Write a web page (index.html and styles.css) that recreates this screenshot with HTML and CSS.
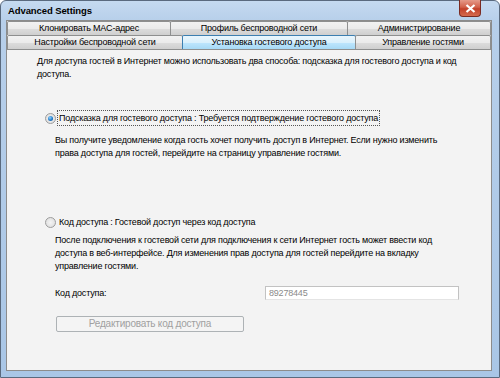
FILE: index.html
```
<!DOCTYPE html>
<html lang="ru">
  <head>
    <meta charset="UTF-8" />
    <title>Advanced Settings</title>
    <link rel="stylesheet" href="styles.css">
  </head>
  <body>
    <div class="window">
      <!-- Title bar -->
      <div class="titlebar">
        <span class="title">Advanced Settings</span>
        <div class="close">
          <svg width="11" height="9" viewBox="0 0 11 9">
            <path d="M1.5 1 L9.5 8 M9.5 1 L1.5 8" stroke="#fff" stroke-width="2.2" />
          </svg>
        </div>
      </div>

      <div class="client">
        <!-- Tab rows -->
        <div class="tabrow">
          <div class="tab w163">Клонировать MAC-адрес</div>
          <div class="tab w177">Профиль беспроводной сети</div>
          <div class="tab grow">Администрирование</div>
        </div>
        <div class="tabrow">
          <div class="tab w175">Настройки беспроводной сети</div>
          <div class="tab w173 active">Установка гостевого доступа</div>
          <div class="tab grow">Управление гостями</div>
        </div>

        <!-- Page content -->
        <div class="panel">
          <p class="intro">
            Для доступа гостей в Интернет можно использовать два способа: подсказка для гостевого доступа и код доступа.
          </p>

          <div class="option first">
            <span class="radio checked"></span>
            <span class="label focused">Подсказка для гостевого доступа : Требуется подтверждение гостевого доступа</span>
          </div>
          <p class="desc">
            Вы получите уведомление когда гость хочет получить доступ в Интернет. Если нужно изменить права доступа для гостей, перейдите на страницу управление гостями.
          </p>

          <div class="option second">
            <span class="radio"></span>
            <span class="label">Код доступа : Гостевой доступ через код доступа</span>
          </div>
          <p class="desc">
            После подключения к гостевой сети для подключения к сети Интернет гость может ввести код доступа в веб-интерфейсе. Для изменения прав доступа для гостей перейдите на вкладку управление гостями.
          </p>

          <div class="code-row">
            <span class="code-label">Код доступа:</span>
            <div class="code-input">89278445</div>
          </div>
          <div class="btn-disabled">Редактировать код доступа</div>
        </div>
      </div>
    </div>
  </body>
</html>
```

FILE: styles.css
```
* {
  margin: 0;
  padding: 0;
  box-sizing: border-box;
}
body {
  width: 500px;
  height: 378px;
  overflow: hidden;
  font-family: "Liberation Sans", "DejaVu Sans", sans-serif;
  font-size: 9px;
  letter-spacing: -0.2px;
  color: #000;
  background: #fff;
}
/* Window frame (Win7 basic look) */
.window {
  width: 500px;
  height: 378px;
  border: 1px solid #5a6a7e;
  border-radius: 6px 6px 0 0;
  background: linear-gradient(to bottom, #c5daf0 0px, #b7cfea 20px, #a9c6e6 100%);
  display: flex;
  flex-direction: column;
  padding: 0 7px 6px 5px;
}
.titlebar {
  height: 19px;
  display: flex;
  align-items: flex-start;
  justify-content: space-between;
}
.title {
  font-weight: bold;
  font-size: 9.5px;
  letter-spacing: -0.1px;
  padding-top: 4px;
  padding-left: 2px;
  color: #000;
}
.close {
  width: 22px;
  height: 17px;
  margin-right: 11px;
  margin-top: -1px;
  border: 1px solid #7a2b22;
  border-top: none;
  border-radius: 0 0 4px 4px;
  background: linear-gradient(to bottom, #e59a8a 0%, #d2614b 45%, #c2402a 55%, #d46a4e 100%);
  display: flex;
  align-items: center;
  justify-content: center;
}
.client {
  flex: 1;
  border: 1px solid #8c8c8c;
  background: #f3f3f3;
  display: flex;
  flex-direction: column;
}
/* Tabs */
.tabrow {
  display: flex;
  height: 14px;
}
.tab {
  border: 1px solid #8e8f8f;
  border-bottom: none;
  border-radius: 2px 2px 0 0;
  background: linear-gradient(to bottom, #f2f2f2 0%, #ebebeb 50%, #dddddd 51%, #cfcfcf 100%);
  text-align: center;
  line-height: 13px;
  white-space: nowrap;
  overflow: hidden;
}
.tab + .tab {
  margin-left: -1px;
}
.tab.active {
  background: linear-gradient(to bottom, #eaf6fd 0%, #d9f0fc 50%, #bee6fd 51%, #a7d9f5 100%);
  border-color: #3c7fb1;
}
.w163 { width: 164px; }
.w177 { width: 178px; }
.w175 { width: 176px; }
.w173 { width: 174px; }
.grow { flex: 1; }
/* Panel content */
.panel {
  flex: 1;
  border-top: 1px solid #8e8f8f;
  padding: 5px 20px 0 30px;
}
p {
  line-height: 13px;
}
.intro {
  width: 425px;
}
.option {
  display: flex;
  align-items: center;
  margin-left: 8px;
}
.option.first {
  margin-top: 29px;
}
.option.second {
  margin-top: 54px;
}
.radio {
  width: 11px;
  height: 11px;
  border-radius: 50%;
  border: 1px solid #9c9c9c;
  background: radial-gradient(circle, #f4f4f4 0%, #dadada 100%);
  margin-right: 1px;
  position: relative;
}
.radio.checked::after {
  content: "";
  position: absolute;
  left: 2px;
  top: 2px;
  width: 5px;
  height: 5px;
  border-radius: 50%;
  background: radial-gradient(circle at 40% 35%, #8fd3ff 0%, #1d76c6 60%, #0f4c8a 100%);
}
.label {
  padding: 1px 1px;
  border: 1px solid transparent;
  line-height: 12px;
}
.label.focused {
  border: 1px dotted #555;
}
.desc {
  margin-left: 18px;
  margin-top: 8px;
  width: 398px;
}
.option.second + .desc {
  margin-top: 4px;
  width: 405px;
}
.code-row {
  display: flex;
  align-items: center;
  margin-left: 18px;
  margin-top: 13px;
}
.code-label {
  width: 210px;
}
.code-input {
  width: 194px;
  height: 14px;
  border: 1px solid #c2c2c2;
  border-bottom-color: #e4e4e4;
  background: #fff;
  color: #8a8a8a;
  line-height: 12px;
  padding-left: 3px;
}
.btn-disabled {
  margin-left: 19px;
  margin-top: 16px;
  width: 188px;
  height: 16px;
  border: 1px solid #adb2b5;
  border-radius: 2px;
  background: #f4f4f4;
  color: #a0a0a0;
  text-align: center;
  line-height: 14px;
  font-size: 10px;
}
```
